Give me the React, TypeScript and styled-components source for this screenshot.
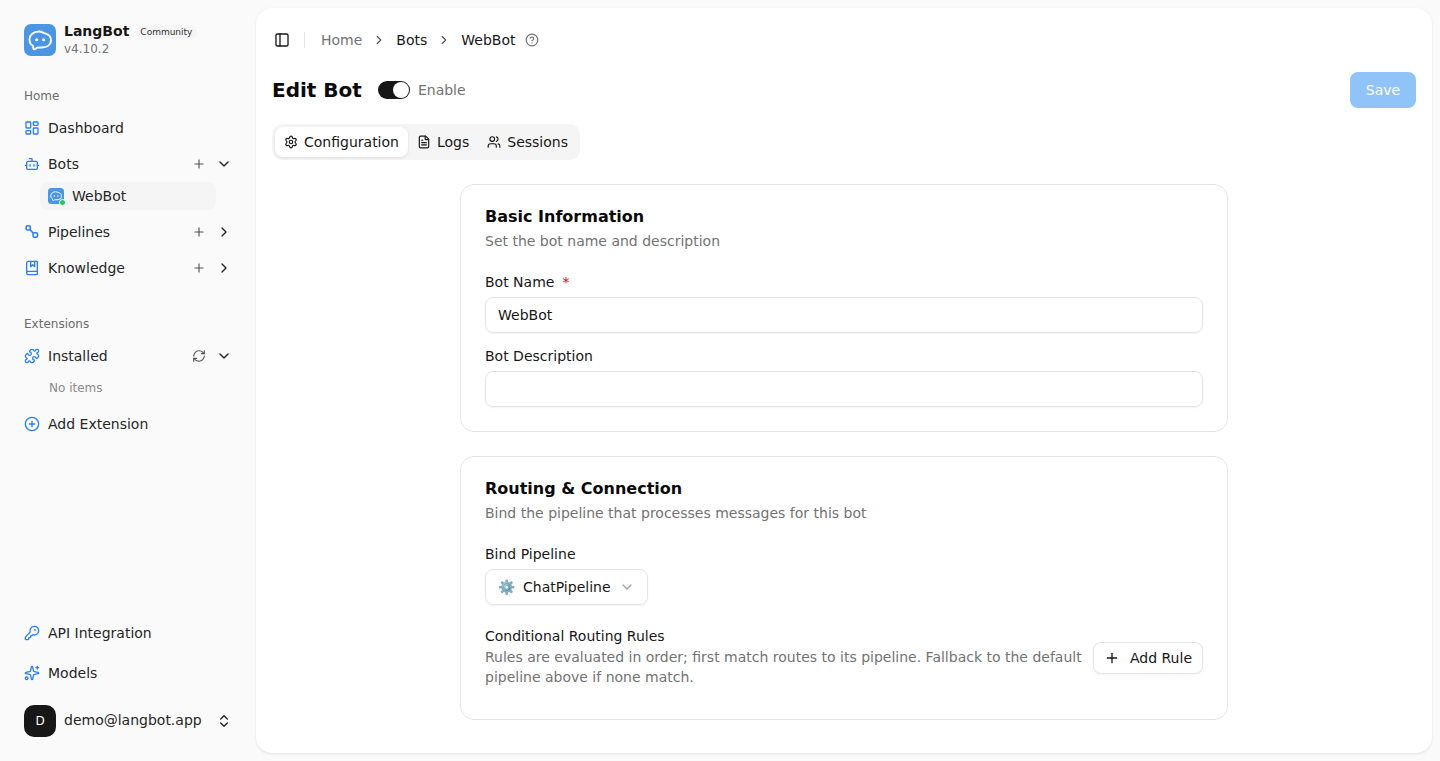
import React from 'react'
import { createGlobalStyle, styled } from 'styled-components'
import {
  Bot,
  BookMarked,
  ChevronDown,
  ChevronRight,
  ChevronsUpDown,
  CircleHelp,
  CirclePlus,
  FileText,
  KeyRound,
  LayoutDashboard,
  PanelLeft,
  Plus,
  Puzzle,
  RefreshCw,
  Settings,
  Sparkles,
  Users,
} from 'lucide-react'

const GlobalStyle = createGlobalStyle`
  html, body {
    margin: 0;
    height: 100%;
    overflow: hidden;
    background: #fafafa;
    font-family: "DejaVu Sans", sans-serif;
    font-size: 14px;
    color: #171717;
  }
  * { box-sizing: border-box; }
`

const Layout = styled.div`
  display: flex;
  height: 761px;
`

const Sidebar = styled.aside`
  width: 256px;
  flex: none;
  display: flex;
  flex-direction: column;
  padding: 24px;
`

const Brand = styled.div`
  display: flex;
  align-items: center;
  gap: 8px;
  height: 32px;
  margin-bottom: 32px;
`

const BrandText = styled.div`
  display: flex;
  flex-direction: column;
  gap: 2px;
`

const BrandRow = styled.div`
  display: flex;
  align-items: center;
  gap: 6px;
  font-size: 14px;
  line-height: 16px;
  font-weight: 700;
`

const Badge = styled.span`
  font-size: 9px;
  line-height: 14px;
  font-weight: 400;
  padding: 0 5px;
  margin-top: 2px;
  border-radius: 7px;
  background: #f5f5f5;
  color: #333;
`

const Version = styled.span`
  font-size: 12px;
  line-height: 16px;
  color: #737373;
`

const SectionLabel = styled.div<{ $top?: number }>`
  font-size: 12px;
  line-height: 16px;
  height: 16px;
  color: #6b6b6b;
  margin-top: ${(p) => p.$top ?? 0}px;
  margin-bottom: 6px;
`

const NavRow = styled.div`
  display: flex;
  align-items: center;
  height: 36px;
  gap: 8px;
  font-size: 14px;
  color: #262626;
`

const NavIcon = styled.span`
  width: 16px;
  height: 16px;
  flex: none;
  display: flex;
  align-items: center;
  justify-content: center;
  color: #2a7ff0;
  svg {
    flex: none;
    display: block;
  }
`

const NavTitle = styled.span`
  flex: 1;
`

const NavActions = styled.span`
  display: flex;
  align-items: center;
  gap: 10px;
  svg { display: block; }
`

const SubItem = styled.div`
  display: flex;
  align-items: center;
  gap: 8px;
  height: 28px;
  margin: 0 0 4px 16px;
  width: 176px;
  padding-left: 8px;
  border-radius: 8px;
  background: #f5f5f5;
  color: #262626;
`

const BotAvatar = styled.span`
  position: relative;
  width: 16px;
  height: 16px;
  display: block;
  svg { display: block; }
`

const StatusDot = styled.span`
  position: absolute;
  right: -2px;
  bottom: -2px;
  width: 7px;
  height: 7px;
  border-radius: 50%;
  background: #22c55e;
  border: 1px solid #fff;
`

const EmptyNote = styled.div`
  height: 32px;
  padding-left: 25px;
  font-size: 12px;
  line-height: 28px;
  color: #8a8a8a;
`

const SidebarBottom = styled.div`
  margin-top: auto;
  display: flex;
  flex-direction: column;
  gap: 4px;
`

const UserRow = styled.div`
  display: flex;
  align-items: center;
  gap: 8px;
  height: 32px;
  margin-top: 10px;
  color: #262626;
`

const UserAvatar = styled.span`
  width: 32px;
  height: 32px;
  border-radius: 10px;
  background: #171717;
  color: #fafafa;
  font-size: 12px;
  display: flex;
  align-items: center;
  justify-content: center;
`

const UserMail = styled.span`
  flex: 1;
  margin-bottom: 2px;
`

const Main = styled.main`
  flex: 1;
  margin: 8px 8px 8px 0;
  background: #fff;
  border-radius: 16px;
  box-shadow: 0 1px 3px rgba(0, 0, 0, 0.1);
  padding: 16px;
  overflow: hidden;
`

const Breadcrumbs = styled.nav`
  display: flex;
  align-items: center;
  height: 32px;
  padding-left: 2px;
  margin-bottom: 16px;
  color: #171717;
`

const Divider = styled.span`
  width: 1px;
  height: 16px;
  background: #e5e5e5;
  margin: 0 16px 0 14px;
`

const Crumb = styled.span<{ $muted?: boolean }>`
  color: ${(p) => (p.$muted ? '#737373' : '#171717')};
`

const CrumbSep = styled(ChevronRight)`
  color: #555;
  margin: 0 10px;
`

const HelpIcon = styled(CircleHelp)`
  color: #737373;
  margin-left: 10px;
`

const TitleRow = styled.div`
  display: flex;
  align-items: center;
  height: 36px;
  margin-bottom: 16px;
`

const PageTitle = styled.h1`
  margin: 0 16px 0 0;
  font-size: 20px;
  line-height: 28px;
  font-weight: 700;
  color: #0a0a0a;
`

const Switch = styled.span`
  width: 32px;
  height: 18px;
  border-radius: 9px;
  background: #171717;
  position: relative;
  display: block;
  &::after {
    content: '';
    position: absolute;
    right: 1px;
    top: 1px;
    width: 16px;
    height: 16px;
    border-radius: 50%;
    background: #fff;
  }
`

const SwitchLabel = styled.span`
  margin-left: 8px;
  color: #737373;
  flex: 1;
`

const SaveButton = styled.button`
  width: 66px;
  height: 36px;
  border: none;
  border-radius: 8px;
  background: #90c4f8;
  color: #fff;
  font: inherit;
`

const Tabs = styled.div`
  display: inline-flex;
  align-items: center;
  height: 36px;
  padding: 3px;
  border-radius: 10px;
  background: #f5f5f5;
  margin-bottom: 24px;
`

const Tab = styled.div<{ $active?: boolean }>`
  display: flex;
  align-items: center;
  gap: 6px;
  height: 30px;
  padding: 0 9px;
  border-radius: 8px;
  color: #171717;
  background: ${(p) => (p.$active ? '#fff' : 'transparent')};
  box-shadow: ${(p) => (p.$active ? '0 1px 3px rgba(0,0,0,0.1)' : 'none')};
`

const Cards = styled.div`
  width: 768px;
  margin: 0 auto;
  display: flex;
  flex-direction: column;
  gap: 24px;
`

const Card = styled.section`
  border: 1px solid #e5e5e5;
  border-radius: 14px;
  padding: 22px 24px 24px;
`

const CardTitle = styled.h2`
  margin: 0;
  font-size: 16px;
  line-height: 20px;
  font-weight: 700;
  color: #0a0a0a;
`

const CardDesc = styled.p`
  margin: 4px 0 0;
  line-height: 20px;
  color: #737373;
`

const FieldLabel = styled.label<{ $top: number }>`
  display: block;
  margin-top: ${(p) => p.$top}px;
  margin-bottom: 6px;
  line-height: 18px;
  color: #171717;
`

const Required = styled.span`
  color: #e7000b;
  margin-left: 8px;
`

const TextInput = styled.div`
  height: 36px;
  border: 1px solid #e5e5e5;
  border-radius: 8px;
  padding: 0 12px;
  line-height: 34px;
  color: #171717;
  box-shadow: 0 1px 2px rgba(0, 0, 0, 0.05);
`

const SelectBox = styled.div`
  display: inline-flex;
  align-items: center;
  gap: 8px;
  height: 36px;
  padding: 0 12px;
  border: 1px solid #e5e5e5;
  border-radius: 8px;
  box-shadow: 0 1px 2px rgba(0, 0, 0, 0.05);
`

const RulesRow = styled.div`
  display: flex;
  align-items: center;
  justify-content: space-between;
  gap: 10px;
  margin: 22px 0 8px;
`

const RulesTitle = styled.div`
  line-height: 18px;
  color: #171717;
`

const RulesHelp = styled.div`
  margin-top: 2px;
  line-height: 20px;
  color: #737373;
`

const OutlineButton = styled.button`
  flex: none;
  display: flex;
  align-items: center;
  gap: 10px;
  height: 32px;
  margin-top: 2px;
  padding: 0 10px;
  border: 1px solid #e5e5e5;
  border-radius: 8px;
  background: #fff;
  font: inherit;
  color: #171717;
  box-shadow: 0 1px 2px rgba(0, 0, 0, 0.05);
`

const Logo = ({ size }: { size: number }) => (
  <svg width={size} height={size} viewBox="0 0 32 32">
    <rect width="32" height="32" rx="7" fill="#4a96e3" />
    <path
      d="M15 7.500c2.500 0 4 1.200 6 1.800 3.500 1 6 3 6 6.700 0 4.800-4 7.500-9 7.500h-3.500c-1.200 0-2.200.5-3.300 1.400-.9.7-2 .3-2-.8v-2C7 20.800 5.500 18.500 5.500 15.500 5.500 11 9.500 7.500 15 7.500z"
      fill="none"
      stroke="#fff"
      strokeWidth="1.900"
    />
    <circle cx="12.700" cy="15.800" r="1.500" fill="#fff" />
    <circle cx="19.700" cy="15.800" r="1.500" fill="#fff" />
  </svg>
)

// two linked nodes, no matching icon in the packages
const PipelineIcon = () => (
  <svg width="16" height="16" viewBox="0 0 16 16" fill="none" stroke="currentColor" strokeWidth="1.600">
    <rect x="2.100" y="1.800" width="4.200" height="4.200" rx="1.500" />
    <rect x="9.100" y="8.800" width="4.400" height="4.400" rx="1.500" />
    <path d="M6 5.800l3.300 3.300" />
  </svg>
)

const App = () => {
  const nav = { size: 16, strokeWidth: 2 }
  const act = { size: 14, color: '#555' }
  const chev = { size: 16, color: '#222' }
  return (
    <Layout>
      <GlobalStyle />
      <Sidebar>
        <Brand>
          <Logo size={32} />
          <BrandText>
            <BrandRow>
              LangBot <Badge>Community</Badge>
            </BrandRow>
            <Version>v4.10.2</Version>
          </BrandText>
        </Brand>
        <SectionLabel>Home</SectionLabel>
        <NavRow>
          <NavIcon><LayoutDashboard {...nav} /></NavIcon>
          <NavTitle>Dashboard</NavTitle>
        </NavRow>
        <NavRow>
          <NavIcon><Bot {...nav} /></NavIcon>
          <NavTitle>Bots</NavTitle>
          <NavActions>
            <Plus {...act} />
            <ChevronDown {...chev} />
          </NavActions>
        </NavRow>
        <SubItem>
          <BotAvatar>
            <Logo size={16} />
            <StatusDot />
          </BotAvatar>
          WebBot
        </SubItem>
        <NavRow>
          <NavIcon><PipelineIcon /></NavIcon>
          <NavTitle>Pipelines</NavTitle>
          <NavActions>
            <Plus {...act} />
            <ChevronRight {...chev} />
          </NavActions>
        </NavRow>
        <NavRow>
          <NavIcon><BookMarked {...nav} /></NavIcon>
          <NavTitle>Knowledge</NavTitle>
          <NavActions>
            <Plus {...act} />
            <ChevronRight {...chev} />
          </NavActions>
        </NavRow>
        <SectionLabel $top={30}>Extensions</SectionLabel>
        <NavRow>
          <NavIcon><Puzzle {...nav} /></NavIcon>
          <NavTitle>Installed</NavTitle>
          <NavActions>
            <RefreshCw {...act} />
            <ChevronDown {...chev} />
          </NavActions>
        </NavRow>
        <EmptyNote>No items</EmptyNote>
        <NavRow>
          <NavIcon><CirclePlus {...nav} /></NavIcon>
          <NavTitle>Add Extension</NavTitle>
        </NavRow>
        <SidebarBottom>
          <NavRow>
            <NavIcon><KeyRound {...nav} /></NavIcon>
            <NavTitle>API Integration</NavTitle>
          </NavRow>
          <NavRow>
            <NavIcon><Sparkles {...nav} /></NavIcon>
            <NavTitle>Models</NavTitle>
          </NavRow>
          <UserRow>
            <UserAvatar>D</UserAvatar>
            <UserMail>demo@langbot.app</UserMail>
            <ChevronsUpDown size={16} color="#222" />
          </UserRow>
        </SidebarBottom>
      </Sidebar>
      <Main>
        <Breadcrumbs>
          <PanelLeft size={16} color="#171717" />
          <Divider />
          <Crumb $muted>Home</Crumb>
          <CrumbSep size={14} />
          <Crumb>Bots</Crumb>
          <CrumbSep size={14} />
          <Crumb>WebBot</Crumb>
          <HelpIcon size={14} />
        </Breadcrumbs>
        <TitleRow>
          <PageTitle>Edit Bot</PageTitle>
          <Switch />
          <SwitchLabel>Enable</SwitchLabel>
          <SaveButton>Save</SaveButton>
        </TitleRow>
        <Tabs>
          <Tab $active>
            <Settings size={14} />
            Configuration
          </Tab>
          <Tab>
            <FileText size={14} />
            Logs
          </Tab>
          <Tab>
            <Users size={14} />
            Sessions
          </Tab>
        </Tabs>
        <Cards>
          <Card>
            <CardTitle>Basic Information</CardTitle>
            <CardDesc>Set the bot name and description</CardDesc>
            <FieldLabel $top={22}>
              Bot Name<Required>*</Required>
            </FieldLabel>
            <TextInput>WebBot</TextInput>
            <FieldLabel $top={14}>Bot Description</FieldLabel>
            <TextInput />
          </Card>
          <Card>
            <CardTitle>Routing &amp; Connection</CardTitle>
            <CardDesc>Bind the pipeline that processes messages for this bot</CardDesc>
            <FieldLabel $top={22}>Bind Pipeline</FieldLabel>
            <SelectBox>
              <span>⚙️</span>
              ChatPipeline
              <ChevronDown size={16} color="#a3a3a3" />
            </SelectBox>
            <RulesRow>
              <div>
                <RulesTitle>Conditional Routing Rules</RulesTitle>
                <RulesHelp>
                  Rules are evaluated in order; first match routes to its pipeline. Fallback to the default
                  pipeline above if none match.
                </RulesHelp>
              </div>
              <OutlineButton>
                <Plus size={16} />
                Add Rule
              </OutlineButton>
            </RulesRow>
          </Card>
        </Cards>
      </Main>
    </Layout>
  )
}

export default App
